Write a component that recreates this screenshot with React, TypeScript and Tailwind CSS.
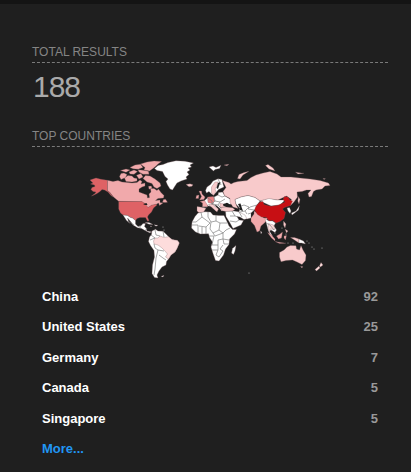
import React from "react";

type Shape = { d: string; fill: string };

const W = "#ffffff";
const US = "#df6265";
const CA = "#f1a9ab";
const RU = "#f8cacb";
const BR = "#fddcdc";
const CN = "#c70f14";

const LAND: Shape[] = [
  // North America
  { fill: US, d: "M90 180L93 179L96 178L101 179.3L107.5 180.3V190.5L110 192.5L113 197L111 195.5L108 192L104.5 190L102 189.5L100 191.5L97 193.5L93 195.5L91.5 196L95 193.5L96 192L93 191.5L91 189.5L92 187.5L95 186.5L94.5 185L90.5 184L93 183Z" },
  { fill: CA, d: "M107.5 180.3L113 181.5L118 180.5L122 182L128 182.5L132 183L137 182.5L140 180L142 181.5L141 184L145 183L145 186L142 187L139 189L139 192L143 193.5L147 195L147.5 198L149.5 197.5L149 194L151 192L150.5 188.5L154 188.5L157 190.5L158.5 189L161 192.5L164 195.5L163.5 198L158 198.5L155.5 200.5L160 200L160 202.5L163 203L159.5 205.5L158.5 203L156 204.5L151.5 205.5L148 208L144.5 205L142 201.8L118.7 201.3L116.5 199.5L113.5 197L110 192.5L107.5 190.5Z" },
  { fill: CA, d: "M163.5 199.5L165.5 199.2L167.5 202.3L165 202.5L162.5 202.2Z" },
  { fill: CA, d: "M119.5 176.5L121 173.5L124 173L127 174.5L125.5 177.5L121 179.5ZM124.5 178L128 175.5L132 176L134 178L137 178.5L137 181L132 182L126 181.5ZM120.5 170.5L126 169L130 170L126 172.3ZM129 172L134 170L137.5 171.5L134 174.3L130 174ZM136.5 175.3L141 173.5L143 177L139 179ZM143 178.5L145.5 175.5L150 176L155 179L160 183L161 186L157 188.5L154 187L152 183.5L147 182ZM138 169.8L143 170.2L148.5 171.3L149 174.2L143 174.2L139 172ZM130 167.5L135 165L140.5 164.2L143 167.5L138 169.2L133 168.8ZM140.5 164L147 162L154 161L161.5 161.5L158 164L156 166L153 168.5L149.5 171L144 170L145 167.5L143 166ZM148.5 186.3L151.3 186L152 188.2L149 189.2Z" },
  { fill: US, d: "M118.7 201.5H142L145 203.5L148 207.5L151.5 205.2L156 204.2L157 205L153.5 208L151.5 212L148.5 215L147.5 217L149 220.5L147.7 221.2L145.5 217.5L140 217.5L137 218.5L135.5 220.5L132.5 218L130.5 217.5L127.5 215.5L123 215L120.5 213L118.7 209Z" },
  { fill: W, d: "M123 215L127.5 215.5L130.5 217.5L132.5 218L135.5 220.5L135.5 224L138 226.5L141 225.8L143 223.5L145.5 223.5L144.5 226.5L146 228L147 231L150 231.5L152 232L149.5 232.7L146 231L141.5 228.5L137.5 227.8L133 225L131 222L127.5 218L128.5 221.5L130 223.5L126.5 220.5Z" },
  { fill: W, d: "M145 222.5L149 222.5L153 224.5L149 224.2ZM154 224.8L158 225.3L156 226.3ZM150 226L152 226.2L151 226.8Z" },
  { fill: W, d: "M154.5 168.5L158 165.5L163 164.5L168 162.5L176 160.7L185 161.2L193.5 163L190 165L191.5 167L188 168L190 170L187 172L189 174.5L186 177L187 179L181 181L177 183L175 186L172.5 190L170 189L167.5 185L166 181.5L168 179L165 176.5L162.5 171.5L157 170.5Z" },
  { fill: RU, d: "M186 184.5L190 183.8L193 184.8L192 186.2L189 186.8Z" },
  // South America
  { fill: W, d: "M152 231L155.5 229.2L158 231L163 231.2L166 234L169 237L172 239.5L177.5 240.5L179.3 243L177 248.5L175 252L171 255L168.5 259L166.5 261.5L166 265L162 267L159 271L157 275L158 278L154.5 277.5L152 273.5L152.5 265L154.5 257L154 250.5L150.5 245.5L148.5 241.5L149.5 237L151.5 234.5Z" },
  { fill: BR, d: "M155 238L158 238L160 236L164 237.5L168.5 236.7L172 239.5L177.5 240.5L179.3 243L177 248.5L175 252L171 255L168.5 259L165.5 257L167.5 254L164.5 250.5L162 248L158 245L154 244L153.5 241Z" },
  { fill: W, d: "M161 276.5L164 275.2L163 277Z" },
  // Europe
  { fill: W, d: "M209 167L213 166L216 167.5L221 165.3L219.5 168.5L215 169.5L213.5 171Z" },
  { fill: W, d: "M205.5 190.5L207 187L210.5 184.5L213 181L218 178.7L222 179.5L223 184L224 187L218.5 189.5L216.5 192L213.5 195L211.5 194L209 191.5L206.5 193Z" },
  { fill: RU, d: "M211.5 193L211.5 187L215 182L218 182L217 186L215 189L216 191.5L213.5 195.5Z" },
  { fill: CA, d: "M199 191L201.5 191L202 194L205 197L204 199.5L199.5 200L201.5 196.5ZM196.5 195.5L199 195L198.5 198.5L195.8 198.5Z" },
  { fill: CA, d: "M200 201.5L204.5 200.5L208 202.5L207.5 207L202.5 207L202.5 203Z" },
  { fill: RU, d: "M197 206.5L203.5 207.5L206 208.3L203.5 212.3L199 212.7L197 211Z" },
  { fill: W, d: "M204.5 200.5L208 197.5L214 197L218 195L218.5 192.5L222.5 192L225 196L230 199L232 202L230.5 204.5L225.5 206L225 208.5L221.5 211L220 208.5L216.5 205.5L214.5 205L218 209L216 211L212.5 206.5L208 206Z" },
  { fill: "#e88083", d: "M207.5 197L213.5 196.5L214.5 201L212 203.5L208 202.5Z" },
  { fill: RU, d: "M208.5 204.5L213.5 203.5L214 206L218.5 209L217 212L213 208.5ZM220 203.5L225.5 204L224.5 207L220 207.5ZM221 207.5L226 207L232.5 207.8L235 209.5L232.5 211L227 211.8L221 210.5Z" },
  { fill: RU, d: "M222.5 180.5L229 182.5L231 184L234 182.5L238 181.5L247 180.5L251 177.5L256 175L263 173L270 171.5L277 174L281 177L291 177L300 178L310 179L320 180.5L328.5 183L330 185.5L325 186L322 189L316 190L313.5 191.5L311.5 196.5L309 197L308 193.5L311 190L306.5 190L302 191.5L297 192L297.5 197L294 202L290.5 205.5L289.5 202.5L291.5 199.5L286.5 196L278 200L269 199L260 201L255 197.5L248 195.5L241 197L235 199.5L236 204.5L238 208.5L233 207L230 202.5L230 198.5L224.5 195.5L223 191.5L226 187.5Z" },
  { fill: RU, d: "M237.5 178.5L239 174.5L244 172.5L249 171.3L243 175L240 179ZM265.5 165.5L268 164.5L273 168L275 171L269 169ZM295.5 172.2L299 172.8L304 173.3L298 174ZM224 165L229 164.3L227 165.8ZM298.5 196.5L300 199.5L299 204L297.8 201ZM323 178.5L325.5 178.7L324 179.5Z" },
  // Africa
  { fill: W, d: "M198 213L205 211.8L210.5 212L213 215L219 215.5L224 215.5L226.5 220.5L229 226L232.5 229.5L236.5 229.5L234.5 234L229.5 239L229 244.5L225.5 249L223.5 255L219 261L215.5 260.5L213 253.5L211 247L212.5 242L209.5 237.5L208.5 233.8L200.5 234L195.5 232L191.5 228L192 222L195 216.5Z" },
  { fill: W, d: "M232.5 248.5L236 245.5L235 251L233.5 254.5L231.5 253Z" },
  // Asia
  { fill: W, d: "M225.5 211.5L234 211L240 212L247 214L248 218.5L244 219.5L240 217L237 216.5L239 220L243.5 220.5L241 225L233 228.5L230 223L226 216.5Z" },
  { fill: W, d: "M236 204L235 199.5L241 197L248 195.5L255 197.5L260 201L257 205L255.5 209L251 213L251 218L247 219L245 215L239 212L240 208.5Z" },
  { fill: CA, d: "M251 218L254 214L254 211L258 213.5L264 218L268 218L265 222.5L261 226L259.5 231L257 232L254.5 225.5L251 221.5Z" },
  { fill: W, d: "M260.5 231L262 232.2L261 234Z" },
  { fill: W, d: "M260 201L269 198.5L277 200L285 200L280 205L271 206Z" },
  { fill: CN, d: "M254.5 210L256 206L260 202L263 201.5L264 204.5L271 206.2L278 205.2L285 202L283 199.5L284.5 196.5L288 197L290 200L292.5 201L290.5 205.5L284.5 207.5L282.5 209L285.5 212.5L284 218.5L280 221.5L276 223L272.5 220.5L269 221L266.5 217.5L261.5 217L257.5 214.5Z" },
  { fill: W, d: "M265 218.5L269 221L272.5 221L275.5 223L274 226L276.5 230L275 232.5L271 230L269.5 231L272.5 236L270 235L268 229.5L266.5 224Z" },
  { fill: BR, d: "M268.5 223.5L273.5 225L275 229.5L270 229L269.5 233L268 228Z" },
  { fill: W, d: "M287 208L289.5 207.5L291 211L290 213.5L288 211ZM291.5 213L296 211L298 208L299.5 205.5L298.5 210L294 213.5L292 215Z" },
  { fill: CA, d: "M267.5 232.5L271 234.5L275 239L275 241L271.5 238ZM275 241.5L281 242.5L286 243.2L279.5 243.5ZM276.5 236L280 234L282.5 232L281.5 238L278.5 239ZM284 236L286.5 235.5L285.5 240L284 238Z" },
  { fill: RU, d: "M283.5 221L286 224L285 228L283.5 225ZM285 229L288 231L286.5 233ZM290.5 237.5L294.5 237.5L299 239L299 243L294.5 240Z" },
  { fill: W, d: "M299 239L303.5 241L305.5 244L301.5 243L299 243Z" },
  // Oceania
  { fill: RU, d: "M279.5 252.5L284 250L287 247L290.5 245.5L296 245.7L296.5 249L299.5 250L301 245.5L303 250L306 255L305.5 260.5L302 264.5L297 262L292.5 260L286 260.5L281 261.7L279.5 257ZM300.5 266.5L302.8 266.5L302 268Z" },
  { fill: BR, d: "M321 262.5L323 265L320.5 267L319.5 265.7ZM319 266L320 268L316.5 271L315 269.5Z" },
];

const BORDERS = [
  // Africa
  "M201 212.5L202 217L196 222H192M202 217L210 223L206 227L199 226M208 212V217L211 222L216 221V215M216 221L220 223H227M211 222L210 229M220 223L219 230L223 233L226 230L230 228M192 225H198L198 233M202 227V234M206 227V234M210 229L213 233L219 230M209 236H214L213 240L212 245H218M213 233L215 236L223 233V239L229 240M218 245V240L223 239L224 244L229 244M218 245L218 250H212M218 250L216 255L219 257L223 251M223 245L220 249L223 251",
  // South America
  "M155 230L156 235L160 236M151 235L155 238L150 240M154 244L155 248L158 250L164 251M158 250L156 258L155 269L154 275M159 255L163 258L166 260M163 231L164 237",
  // Europe and the Middle East
  "M208 198L212 201V205M214 197L215 201L220 202L225 199M218 195L222 197L225 196M215 201L212 204L218 205L221 208M218 205L220 202M202 207H207M218 179L221 185M232 211L235 216L238 217M239 212L242 217M230 221L236 222L239 220M235 216L230 216M248 214L251 213M240 212L245 211L249 207L244 205L238 207M245 211L247 214M257 205L250 207L248 209L254 210",
  // Southeast Asia and Central America
  "M266 223L270 225L274 230M128 221L134 225M140 225V228M147 228L145 231",
];

const SPECKS = [
  [282, 228], [286, 234], [288, 243], [293, 243], [307, 241], [309, 243], [312, 247],
  [314, 249], [322, 248], [249, 273], [163, 227], [164, 230], [275, 233],
];

function WorldMap() {
  return (
    <svg viewBox="82 156 256 126" className="block h-[126px] w-[256px]" role="img">
      {LAND.map((s, i) => (
        <path key={i} d={s.d} fill={s.fill} stroke="#77595b" strokeWidth={0.3} strokeLinejoin="round" />
      ))}
      {BORDERS.map((d, i) => (
        <path key={i} d={d} fill="none" stroke="#777" strokeWidth={0.65} />
      ))}
      {SPECKS.map(([x, y], i) => (
        <circle key={i} cx={x} cy={y} r={0.6} fill="#aaa" />
      ))}
      {/* inland seas and straits */}
      <path
        fill="#1f1f1f"
        d="M223 204.2L227 202.8L232 205.5L227 206.6L223.5 206ZM238 204L240.5 203.5L241.5 207L243 211L240 210L239.5 207ZM143 204L146.5 203L147.5 205L145 205ZM218 183L220.5 182L219 186L218 189L216.5 188Z"
      />
    </svg>
  );
}

const COUNTRIES: [string, number][] = [
  ["China", 92],
  ["United States", 25],
  ["Germany", 7],
  ["Canada", 5],
  ["Singapore", 5],
];

function Heading({ children }: { children: React.ReactNode }) {
  return (
    <h2 className="h-[18px] border-b border-dashed border-[#7a7a7a] text-[12px] leading-[14px] text-[#858585]">
      {children}
    </h2>
  );
}

export default function App() {
  return (
    <main className="h-[472px] w-[411px] border-t-4 border-[#141414] bg-[#1f1f1f] pl-8 pr-[23px] pt-[41px] font-['Liberation_Sans',Arial,sans-serif]">
      <Heading>TOTAL RESULTS</Heading>
      <div className="h-[66px] pl-px pt-[6px] text-[30px] leading-[36px] tracking-[-1px] text-[#aaa]">188</div>
      <Heading>TOP COUNTRIES</Heading>
      <div className="mt-[9px] pl-[50px]">
        <WorldMap />
      </div>
      <ul className="-mt-px px-[10px] text-[13px] font-bold">
        {COUNTRIES.map(([name, count]) => (
          <li key={name} className="flex h-[30.6px] items-center justify-between">
            <span className="text-white">{name}</span>
            <span className="text-[#999]">{count}</span>
          </li>
        ))}
        <li className="flex h-[30px] items-center text-[#2196f3]">More...</li>
      </ul>
    </main>
  );
}
